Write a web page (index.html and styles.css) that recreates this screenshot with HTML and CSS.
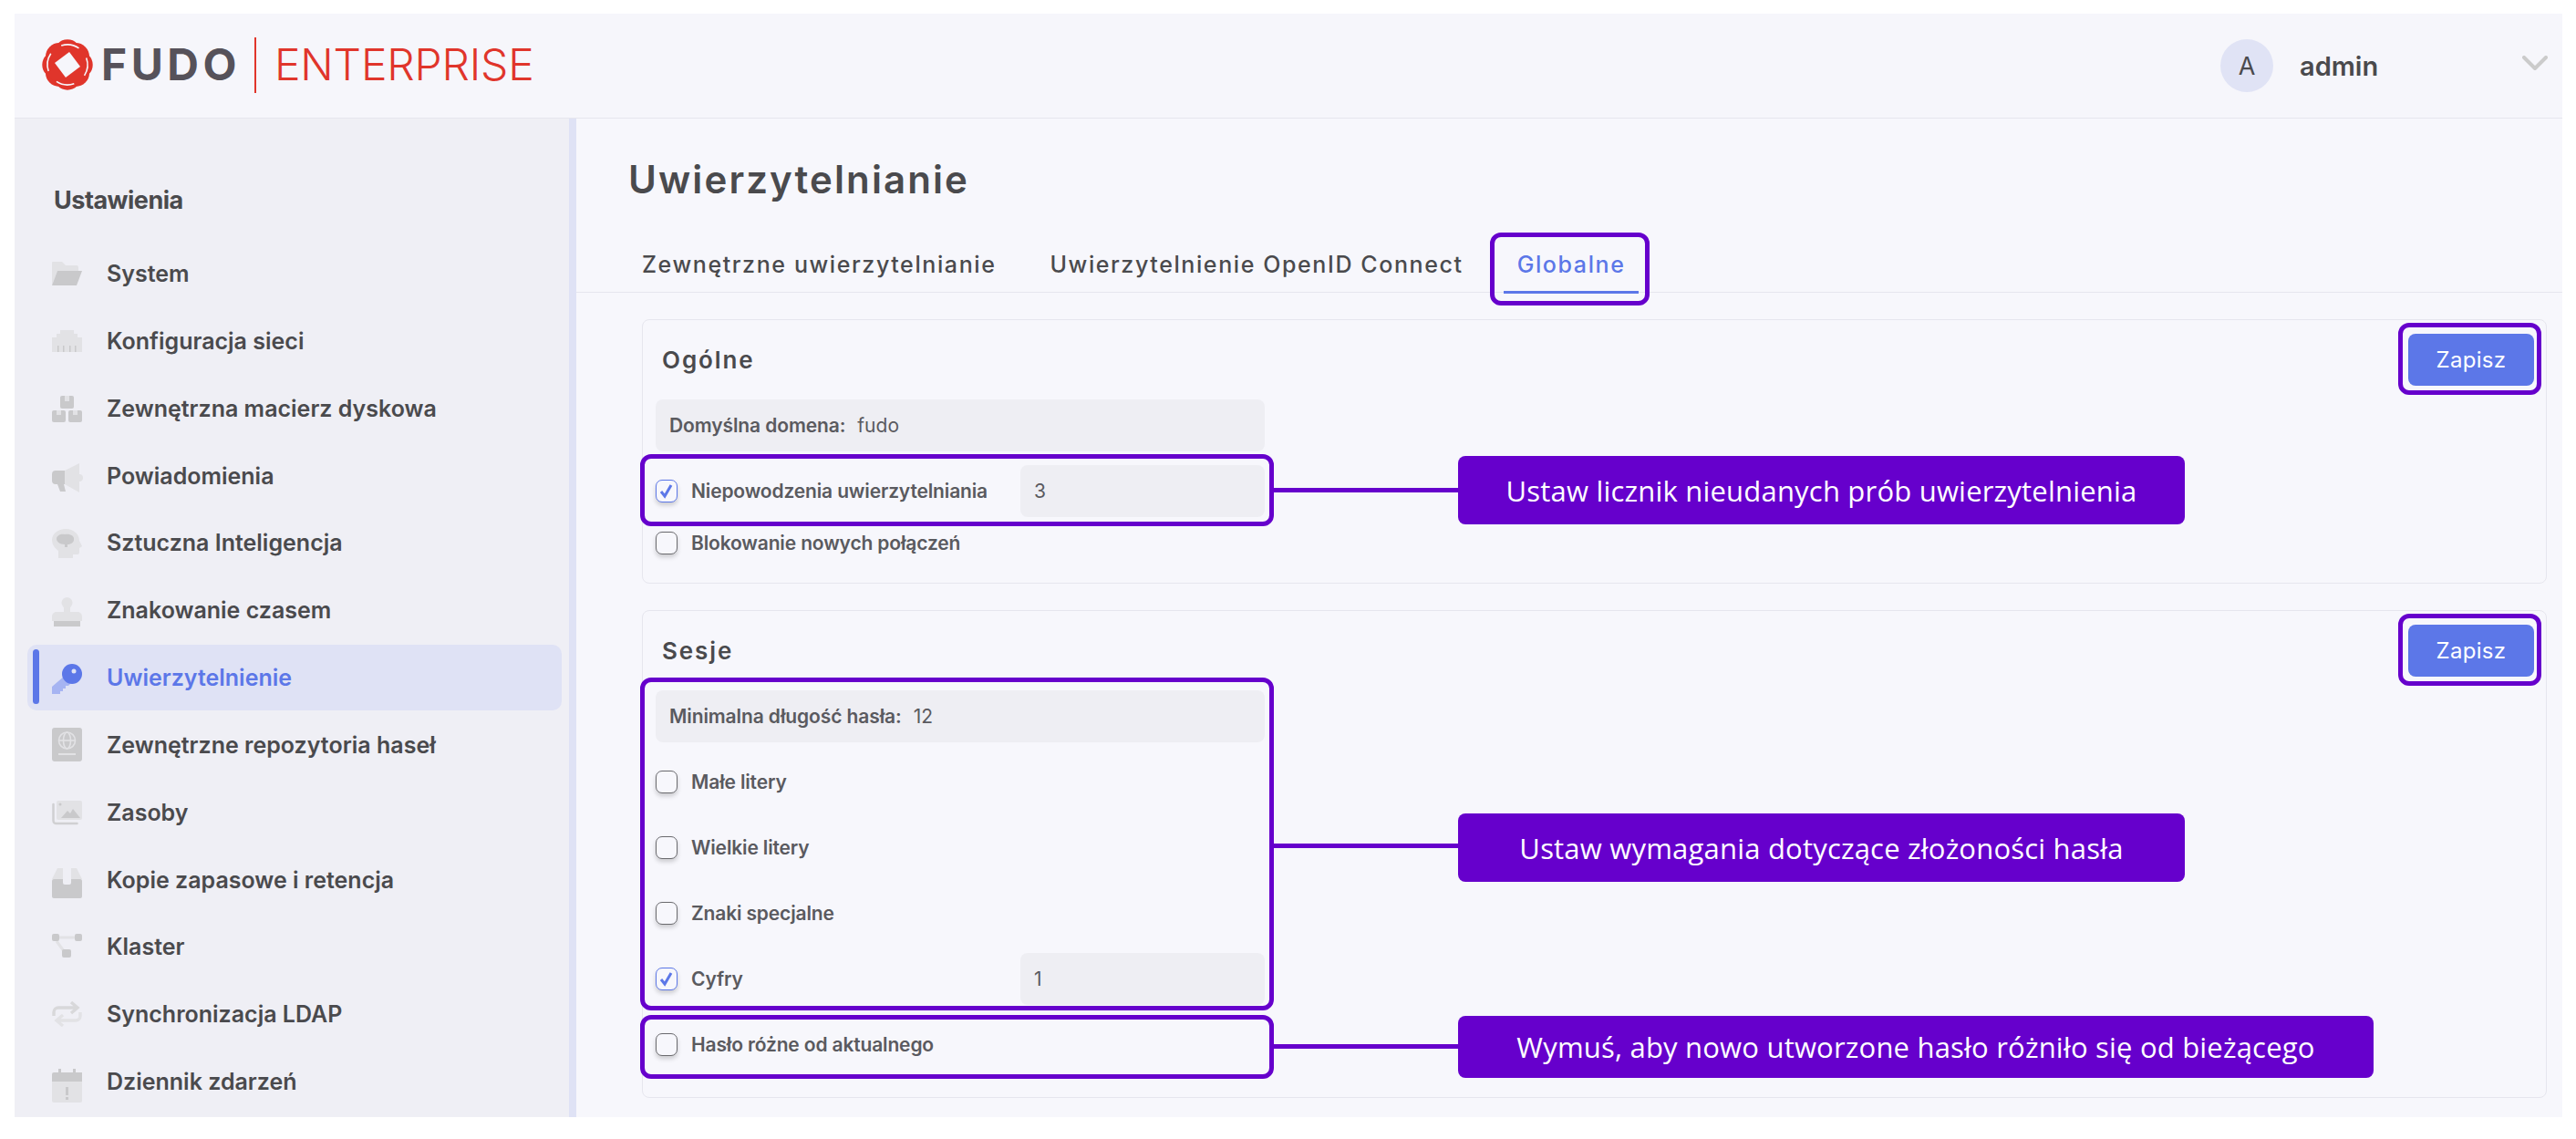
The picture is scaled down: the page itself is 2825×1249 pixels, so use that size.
FILE: index.html
```html
<!DOCTYPE html>
<html lang="pl">
<head>
  <meta charset="UTF-8" />
  <title>Fudo Enterprise - Uwierzytelnianie</title>
  <link rel="stylesheet" href="styles.css">
</head>
<body>
  <div class="app">
    <header class="topbar">
      <div class="logo">
        <svg class="logo-mark" viewBox="0 0 58 58" width="58" height="58">
          <g fill="#e0352b">
            <rect x="5" y="5" width="48" height="48" rx="15"/>
            <rect x="5" y="5" width="48" height="48" rx="15" transform="rotate(45 29 29)"/>
          </g>
          <circle cx="29" cy="29" r="22" fill="none" stroke="#f6f6fb" stroke-width="1.6" stroke-dasharray="20 14.6" transform="rotate(-20 29 29)"/>
          <path d="M31 15 43 31 27 43 15 27z" fill="#f6f6fb"/>
        </svg>
        <span class="logo-fudo">FUDO</span>
        <span class="logo-line"></span>
        <span class="logo-ent">ENTERPRISE</span>
      </div>
      <div class="user">
        <span class="avatar">A</span>
        <span class="user-name">admin</span>
        <svg class="chevron" viewBox="0 0 28 17" width="28" height="17">
          <path d="M2 2 14 14 26 2" fill="none" stroke="#cbcbcb" stroke-width="4" stroke-linecap="round" stroke-linejoin="round"/>
        </svg>
      </div>
    </header>

    <div class="layout">
      <aside class="sidebar">
        <h2 class="side-title">Ustawienia</h2>
        <nav class="side-nav">
          <a class="side-item">
            <svg class="ico" viewBox="0 0 33 38"><path class="lt" d="M0 7a1 1 0 0 1 1-1h10l4 4h12a2 2 0 0 1 2 2v4H6L0 32z"/><path class="dk" d="M6 16h27l-6 16H0z"/></svg>
            System
          </a>
          <a class="side-item">
            <svg class="ico" viewBox="0 0 33 38"><path class="lt" d="M9 7h15v4h4v4h5v16H0V15h5v-4h4z"/><path class="dk" d="M6 24h1.5v7H6zM12 24h1.5v7H12zM19 24h1.5v7H19zM25 24h1.5v7H25z"/></svg>
            Konfiguracja sieci
          </a>
          <a class="side-item">
            <svg class="ico" viewBox="0 0 33 38"><rect class="dk" x="9" y="5" width="15" height="14" rx="2"/><rect class="dk" x="0" y="21" width="15" height="13" rx="2"/><rect class="dk" x="18" y="21" width="15" height="13" rx="2"/><path class="lt" d="M14 5h5v6h-5zM5 21h5v5H5zM23 21h5v5h-5z"/></svg>
            Zewnętrzna macierz dyskowa
          </a>
          <a class="side-item">
            <svg class="ico" viewBox="0 0 33 38"><path class="lt" d="M14 13 30 5v32l-16-9zM30 17a4 4 0 0 1 0 8z"/><path class="dk" d="M4 13h10v15h-1l2 8h-6l-3-8H4a4 4 0 0 1-4-4v-7a4 4 0 0 1 4-4z"/></svg>
            Powiadomienia
          </a>
          <a class="side-item">
            <svg class="ico" viewBox="0 0 33 38"><path class="lt" d="M15 4c9 0 15 6 15 13l3 6-3 2v5a2 2 0 0 1-2 2h-5v4H7v-8C3 25 0 21 0 16 0 9 7 4 15 4z"/><path class="dk" d="M5 15c0-4 5-6 9-5 5-1 11 1 10 6 0 3-4 5-7 5v3h-3v-3c-5 0-9-3-9-6z"/></svg>
            Sztuczna Inteligencja
          </a>
          <a class="side-item">
            <svg class="ico" viewBox="0 0 33 38"><circle class="lt" cx="16.5" cy="11" r="6"/><path class="lt" d="M13 14h7v7h8a5 5 0 0 1 5 5v5H0v-5a5 5 0 0 1 5-5h8z"/><rect class="dk" x="2" y="31" width="29" height="6"/></svg>
            Znakowanie czasem
          </a>
          <a class="side-item active">
            <svg class="ico" viewBox="0 0 33 38"><path fill="#a6b4f2" d="M14 17 0 29v8h9v-3h3v-3h3v-3h3l4-4z"/><circle fill="#5c77e8" cx="22" cy="15" r="11"/><circle fill="#dfe2f5" cx="24" cy="12" r="2.5"/></svg>
            Uwierzytelnienie
          </a>
          <a class="side-item">
            <svg class="ico" viewBox="0 0 33 38"><rect class="dk" x="0" y="0" width="33" height="37" rx="3"/><g fill="none" stroke="#e2e2e5" stroke-width="1.6"><circle cx="16.5" cy="14" r="9"/><ellipse cx="16.5" cy="14" rx="4" ry="9"/><path d="M7.5 14h18"/></g><rect class="lt" x="7" y="28" width="19" height="2"/></svg>
            Zewnętrzne repozytoria haseł
          </a>
          <a class="side-item">
            <svg class="ico" viewBox="0 0 33 38"><rect class="lt" x="5" y="6" width="28" height="21" rx="2"/><path class="dk" d="M10 25l7-8 3 3 3-5 8 10z"/><circle class="dk" cx="9" cy="10" r="1.5"/><path d="M1.5 10v18a3 3 0 0 0 3 3h23" fill="none" stroke="#d0d0d2" stroke-width="2.5" stroke-linecap="round"/></svg>
            Zasoby
          </a>
          <a class="side-item">
            <svg class="ico" viewBox="0 0 33 38"><path class="lt" d="M6 6h21l6 12H0z"/><rect class="dk" x="0" y="18" width="33" height="21" rx="2"/><path fill="#efeff5" d="M12 6h9v16a2 2 0 0 1-2 2h-5a2 2 0 0 1-2-2z"/></svg>
            Kopie zapasowe i retencja
          </a>
          <a class="side-item">
            <svg class="ico" viewBox="0 0 33 38"><path d="M8 9h17M5 13l8 11" fill="none" stroke="#e2e2e5" stroke-width="3"/><rect class="dk" x="0" y="5" width="8" height="8" rx="2"/><rect class="dk" x="25" y="5" width="8" height="8" rx="2"/><rect class="dk" x="11" y="22" width="10" height="9" rx="2"/></svg>
            Klaster
          </a>
          <a class="side-item">
            <svg class="ico" viewBox="0 0 33 38"><path d="M2 21v-4a5 5 0 0 1 5-5h20M21 6l7 6-7 6" fill="none" stroke="#d8d8da" stroke-width="3.4"/><path d="M31 17v4a5 5 0 0 1-5 5H6M12 20l-7 6 7 6" fill="none" stroke="#e2e2e5" stroke-width="3.4"/></svg>
            Synchronizacja LDAP
          </a>
          <a class="side-item">
            <svg class="ico" viewBox="0 0 33 38"><rect class="lt" x="0" y="17" width="33" height="25" rx="2"/><path class="dk" d="M2 9h31v10H0v-8a2 2 0 0 1 2-2zM7 5h3v6H7zM23 5h3v6h-3zM15 25h3v9h-3zM15 36h3v3h-3z"/></svg>
            Dziennik zdarzeń
          </a>
        </nav>
      </aside>

      <main class="content">
        <h1 class="page-title">Uwierzytelnianie</h1>
        <div class="tabs">
          <a class="tab">Zewnętrzne uwierzytelnianie</a>
          <a class="tab">Uwierzytelnienie OpenID Connect</a>
          <a class="tab current">Globalne</a>
        </div>

        <div class="cards">
          <section class="card">
            <div class="card-head">
              <h3>Ogólne</h3>
              <button class="save">Zapisz</button>
            </div>
            <div class="field"><b>Domyślna domena:</b><span>fudo</span></div>
            <div class="row gap">
              <span class="check on"><svg viewBox="0 0 24 25" width="24" height="25"><path d="M6 13l4 5 7-12" fill="none" stroke="#5c77e8" stroke-width="3"/></svg></span>
              <label>Niepowodzenia uwierzytelniania</label>
              <span class="value">3</span>
            </div>
            <div class="row">
              <span class="check"></span>
              <label>Blokowanie nowych połączeń</label>
            </div>
          </section>

          <section class="card card-sessions">
            <div class="card-head">
              <h3>Sesje</h3>
              <button class="save">Zapisz</button>
            </div>
            <div class="field"><b>Minimalna długość hasła:</b><span>12</span></div>
            <div class="row gap"><span class="check"></span><label>Małe litery</label></div>
            <div class="row gap"><span class="check"></span><label>Wielkie litery</label></div>
            <div class="row gap"><span class="check"></span><label>Znaki specjalne</label></div>
            <div class="row gap">
              <span class="check on"><svg viewBox="0 0 24 25" width="24" height="25"><path d="M6 13l4 5 7-12" fill="none" stroke="#5c77e8" stroke-width="3"/></svg></span>
              <label>Cyfry</label>
              <span class="value">1</span>
            </div>
            <div class="row gap"><span class="check"></span><label>Hasło różne od aktualnego</label></div>
          </section>
        </div>

        <!-- adnotacje na zrzucie -->
        <div class="mark mark-tab"></div>
        <div class="mark mark-save1"></div>
        <div class="mark mark-save2"></div>
        <div class="mark mark-fail"></div>
        <div class="mark mark-complex"></div>
        <div class="mark mark-diff"></div>
        <div class="link link-fail"></div>
        <div class="link link-complex"></div>
        <div class="link link-diff"></div>
        <div class="note note-fail">Ustaw licznik nieudanych prób uwierzytelnienia</div>
        <div class="note note-complex">Ustaw wymagania dotyczące złożoności hasła</div>
        <div class="note note-diff">Wymuś, aby nowo utworzone hasło różniło się od bieżącego</div>
      </main>
    </div>
  </div>
</body>
</html>
```

FILE: styles.css
```css
:root {
  --bg: #f7f7fc;
  --side: #efeff5;
  --blue: #5c77e8;
  --pale: #dfe2f5;
  --line: #e6e6ee;
  --field: #eeeef3;
  --text: #4a4a4d;
  --purple: #6600cc;
}

* {
  box-sizing: border-box;
  margin: 0;
  padding: 0;
}

html, body {
  height: 1249px;
  overflow: hidden;
  background: #fff;
}

body {
  font-family: Inter, 'Noto Sans', sans-serif;
  color: var(--text);
}

.app {
  margin: 15px 15px 0 16px;
  height: 1210px;
  background: var(--bg);
  display: flex;
  flex-direction: column;
  overflow: hidden;
}

/* gorny pasek */
.topbar {
  height: 115px;
  flex: none;
  background: #f6f6fb;
  border-bottom: 1px solid var(--line);
  display: flex;
  align-items: center;
  justify-content: space-between;
  padding: 0 16px 0 29px;
}

.logo {
  display: flex;
  align-items: center;
  margin-top: -2px;
}

.logo-fudo {
  margin-left: 8px;
  font-size: 48px;
  font-weight: 700;
  line-height: 58px;
  letter-spacing: 4.5px;
  color: #56525a;
}

.logo-line {
  width: 2px;
  height: 61px;
  margin: 0 20px 0 15px;
  background: #e0352b;
}

.logo-ent {
  font-size: 48px;
  font-weight: 300;
  line-height: 58px;
  letter-spacing: -0.2px;
  color: #e0352b;
}

.user {
  display: flex;
  align-items: center;
}

.avatar {
  width: 58px;
  height: 58px;
  border-radius: 50%;
  background: #e0e3f5;
  display: flex;
  align-items: center;
  justify-content: center;
  font-size: 27px;
}

.user-name {
  width: 273px;
  padding-left: 29px;
  font-size: 29px;
  font-weight: 600;
}

.chevron {
  margin-top: -5px;
}

.layout {
  flex: 1;
  display: flex;
  min-height: 0;
}

/* menu boczne */
.sidebar {
  width: 616px;
  flex: none;
  background: var(--side);
  border-right: 8px solid var(--pale);
  padding: 0 8px 0 14px;
  overflow: hidden;
}

.side-title {
  margin: 70px 0 24px 29px;
  font-size: 27px;
  font-weight: 700;
  line-height: 40px;
  letter-spacing: -0.5px;
}

.side-nav {
  display: flex;
  flex-direction: column;
  gap: 1.85px;
}

.side-item {
  position: relative;
  height: 72px;
  flex: none;
  display: flex;
  align-items: center;
  gap: 27px;
  padding-left: 27px;
  border-radius: 10px;
  font-size: 25px;
  font-weight: 600;
}

.side-item.active {
  background: var(--pale);
  color: var(--blue);
}

.side-item.active::before {
  content: "";
  position: absolute;
  left: 6px;
  top: 5px;
  width: 7px;
  height: 60px;
  border-radius: 4px;
  background: var(--blue);
}

.ico {
  width: 33px;
  height: 38px;
  flex: none;
  overflow: visible;
}

.ico .dk { fill: #c9c9cb; }
.ico .lt { fill: #e2e2e5; }

/* tresc */
.content {
  position: relative;
  flex: 1;
  min-width: 0;
}

.page-title {
  margin: 42px 0 0 57px;
  font-size: 42px;
  font-weight: 600;
  line-height: 50px;
  letter-spacing: 2.1px;
}

.tabs {
  height: 144px;
  margin-top: -45px;
  padding: 93px 0 0 57px;
  display: flex;
  gap: 29px;
  border-bottom: 1px solid var(--line);
}

.tab {
  height: 52px;
  padding: 0 15px;
  font-size: 25px;
  font-weight: 500;
  line-height: 40px;
  letter-spacing: 1.6px;
  border-bottom: 3px solid transparent;
}

.tab.current {
  color: var(--blue);
  border-bottom-color: var(--blue);
}

.cards {
  padding: 29px 17px 0 72px;
  display: flex;
  flex-direction: column;
  gap: 29px;
}

.card {
  border: 1px solid var(--line);
  border-radius: 8px;
  padding: 15px 13px 15px 14px;
}

.card-sessions {
  padding-bottom: 29px;
}

.card-head {
  height: 57px;
  margin-bottom: 15px;
  display: flex;
  align-items: center;
  justify-content: space-between;
}

.card-head h3 {
  margin-left: 7px;
  font-size: 26px;
  font-weight: 600;
  letter-spacing: 1.9px;
}

.save {
  width: 138px;
  height: 57px;
  border: none;
  border-radius: 8px;
  background: var(--blue);
  color: #fff;
  font-family: inherit;
  font-size: 24px;
  letter-spacing: 0.3px;
}

.field {
  width: 668px;
  height: 57px;
  border-radius: 8px;
  background: var(--field);
  display: flex;
  align-items: center;
  gap: 13px;
  padding-left: 15px;
  font-size: 21px;
  color: #5a5a5f;
}

.field b {
  font-weight: 600;
  letter-spacing: -0.1px;
}

.row {
  width: 668px;
  height: 57px;
  display: flex;
  align-items: center;
}

.row.gap {
  margin-top: 15px;
}

.row label {
  margin-left: 15px;
  font-size: 21px;
  font-weight: 600;
  letter-spacing: -0.15px;
  color: #5a5a5f;
}

.check {
  width: 24px;
  height: 25px;
  flex: none;
  border: 1.5px solid #6a6a6e;
  border-radius: 7px;
  box-shadow: 0 3px 5px rgba(0, 0, 0, 0.18);
  background: var(--bg);
}

.check.on {
  border-color: var(--blue);
}

.check svg {
  display: block;
  margin: -1.5px;
}

.value {
  width: 268px;
  height: 57px;
  margin-left: auto;
  padding-left: 15px;
  border-radius: 8px;
  background: var(--field);
  display: flex;
  align-items: center;
  font-size: 21px;
  color: #5a5a5f;
}

/* ramki i opisy naniesione na zrzut */
.mark {
  position: absolute;
  border: 5px solid var(--purple);
  border-radius: 12px;
}

.mark-tab { left: 1002px; top: 125px; width: 175px; height: 80px; }
.mark-save1 { left: 1998px; top: 224px; width: 157px; height: 79px; }
.mark-save2 { left: 1998px; top: 543px; width: 157px; height: 79px; }
.mark-fail { left: 70px; top: 368px; width: 695px; height: 79px; }
.mark-complex { left: 70px; top: 613px; width: 695px; height: 365px; }
.mark-diff { left: 70px; top: 983px; width: 695px; height: 70px; }

.link {
  position: absolute;
  left: 765px;
  width: 202px;
  height: 5px;
  background: var(--purple);
}

.link-fail { top: 405px; }
.link-complex { top: 795px; }
.link-diff { top: 1015px; }

.note {
  position: absolute;
  left: 967px;
  width: 797px;
  height: 75px;
  border-radius: 8px;
  background: var(--purple);
  color: #fff;
  display: flex;
  align-items: center;
  justify-content: center;
  font-family: 'Open Sans', sans-serif;
  font-size: 31px;
  letter-spacing: 0.2px;
}

.note-fail { top: 370px; }
.note-complex { top: 762px; }
.note-diff { top: 984px; width: 1004px; height: 68px; }
```
